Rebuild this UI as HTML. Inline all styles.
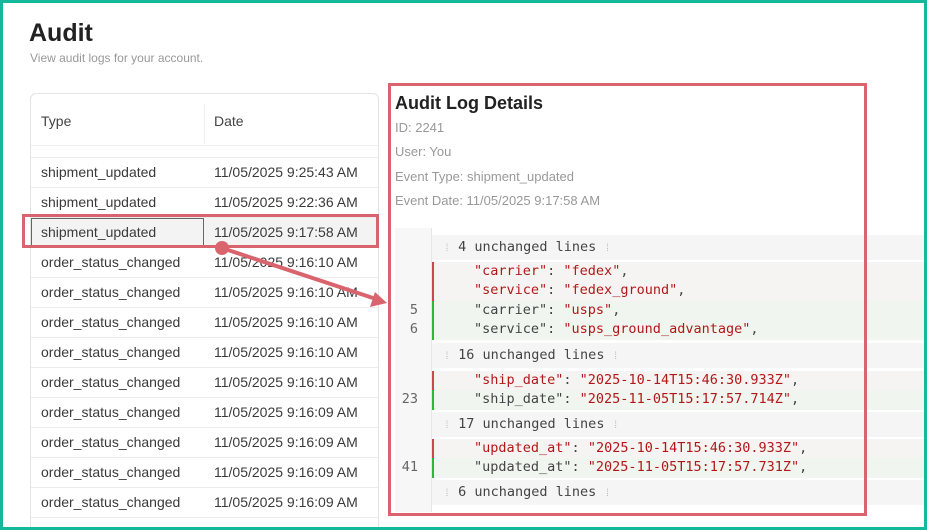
<!DOCTYPE html>
<html><head><style>
*{margin:0;padding:0;box-sizing:border-box}
html,body{width:927px;height:530px;overflow:hidden}
body{background:#fff;font-family:"Liberation Sans",Arial,sans-serif;position:relative}
.frame{position:absolute;left:0;top:0;width:927px;height:530px;border:3px solid #14b89a}
.a{position:absolute;white-space:nowrap}
.card{position:absolute;left:30px;top:93px;width:349px;height:440px;border:1px solid #e4e4e4;border-radius:6px;overflow:hidden}
.row{position:absolute;left:0;width:349px;height:30px;border-top:1px solid #ececec;font-size:14px;color:#3a3a3a;line-height:28px}
.row span{position:absolute}
.mono{font-family:"DejaVu Sans Mono","Liberation Mono",monospace;font-size:13.5px}
.ln{position:absolute;left:395px;width:37px;text-align:right;padding-right:14px;color:#666;font-family:"DejaVu Sans Mono",monospace;font-size:13.5px}
.r{color:#b31818}.g{color:#444}
</style></head><body>
<div class="a" style="left:29px;top:19px;font-size:25px;font-weight:bold;color:#222">Audit</div>
<div class="a" style="left:30px;top:51px;font-size:12px;color:#999">View audit logs for your account.</div>

<div class="card">
 <div class="a" style="left:10px;top:19px;font-size:14px;color:#444">Type</div>
 <div class="a" style="left:183px;top:19px;font-size:14px;color:#444">Date</div>
 <div style="position:absolute;left:173px;top:10px;width:1px;height:40px;background:#f0f0f0"></div>
 <div class="row" style="top:51px;height:13px;border-top:1px solid #f0f0f0"></div>
 <div class="row" style="top:63px"><span style="left:10px">shipment_updated</span><span style="left:183px">11/05/2025 9:25:43 AM</span></div>
 <div class="row" style="top:93px"><span style="left:10px">shipment_updated</span><span style="left:183px">11/05/2025 9:22:36 AM</span></div>
 <div class="row" style="top:123px;background:#f3f3f3"><div style="position:absolute;left:0;top:0;width:173px;height:29px;border:1px solid #666"></div><span style="left:10px">shipment_updated</span><span style="left:183px">11/05/2025 9:17:58 AM</span></div>
 <div class="row" style="top:153px"><span style="left:10px">order_status_changed</span><span style="left:183px">11/05/2025 9:16:10 AM</span></div>
 <div class="row" style="top:183px"><span style="left:10px">order_status_changed</span><span style="left:183px">11/05/2025 9:16:10 AM</span></div>
 <div class="row" style="top:213px"><span style="left:10px">order_status_changed</span><span style="left:183px">11/05/2025 9:16:10 AM</span></div>
 <div class="row" style="top:243px"><span style="left:10px">order_status_changed</span><span style="left:183px">11/05/2025 9:16:10 AM</span></div>
 <div class="row" style="top:273px"><span style="left:10px">order_status_changed</span><span style="left:183px">11/05/2025 9:16:10 AM</span></div>
 <div class="row" style="top:303px"><span style="left:10px">order_status_changed</span><span style="left:183px">11/05/2025 9:16:09 AM</span></div>
 <div class="row" style="top:333px"><span style="left:10px">order_status_changed</span><span style="left:183px">11/05/2025 9:16:09 AM</span></div>
 <div class="row" style="top:363px"><span style="left:10px">order_status_changed</span><span style="left:183px">11/05/2025 9:16:09 AM</span></div>
 <div class="row" style="top:393px"><span style="left:10px">order_status_changed</span><span style="left:183px">11/05/2025 9:16:09 AM</span></div>
 <div class="row" style="top:423px"><span style="left:10px">order_status_changed</span><span style="left:183px">11/05/2025 9:16:09 AM</span></div>
</div>
<div style="position:absolute;left:22px;top:214px;width:357px;height:34px;border:3px solid #d9646e"></div>

<div style="position:absolute;left:395px;top:228px;width:532px;height:284px;background:#fff"></div>
<div style="position:absolute;left:395px;top:228px;width:37px;height:284px;background:#f7f7f7;border-right:1px solid #e6e6e6"></div>
<div style="position:absolute;left:432px;top:235px;width:495px;height:25px;background:#f5f5f5"></div>
<div style="position:absolute;left:432px;top:262px;width:495px;height:39px;background:#f6f3f3;border-left:2px solid #c9484e"></div>
<div style="position:absolute;left:432px;top:301px;width:495px;height:39px;background:#f0f5f0;border-left:2px solid #2db92d"></div>
<div style="position:absolute;left:432px;top:343px;width:495px;height:25px;background:#f5f5f5"></div>
<div style="position:absolute;left:432px;top:371px;width:495px;height:19px;background:#f6f3f3;border-left:2px solid #c9484e"></div>
<div style="position:absolute;left:432px;top:390px;width:495px;height:20px;background:#f0f5f0;border-left:2px solid #2db92d"></div>
<div style="position:absolute;left:432px;top:412px;width:495px;height:25px;background:#f5f5f5"></div>
<div style="position:absolute;left:432px;top:439px;width:495px;height:19px;background:#f6f3f3;border-left:2px solid #c9484e"></div>
<div style="position:absolute;left:432px;top:458px;width:495px;height:20px;background:#f0f5f0;border-left:2px solid #2db92d"></div>
<div style="position:absolute;left:432px;top:480px;width:495px;height:25px;background:#f5f5f5"></div>

<div class="a mono g" style="left:444px;top:239px"><span style="color:#bbb;font-size:10px">⁞</span> 4 unchanged lines <span style="color:#bbb;font-size:10px">⁞</span></div>
<div class="a mono" style="left:474px;top:263px"><span class="r">"carrier"</span><span class="g">: </span><span class="r">"fedex"</span><span class="g">,</span></div>
<div class="a mono" style="left:474px;top:282px"><span class="r">"service"</span><span class="g">: </span><span class="r">"fedex_ground"</span><span class="g">,</span></div>
<div class="ln" style="top:302px">5</div>
<div class="a mono" style="left:474px;top:302px"><span class="g">"carrier": </span><span class="r">"usps"</span><span class="g">,</span></div>
<div class="ln" style="top:321px">6</div>
<div class="a mono" style="left:474px;top:321px"><span class="g">"service": </span><span class="r">"usps_ground_advantage"</span><span class="g">,</span></div>
<div class="a mono g" style="left:444px;top:347px"><span style="color:#bbb;font-size:10px">⁞</span> 16 unchanged lines <span style="color:#bbb;font-size:10px">⁞</span></div>
<div class="a mono" style="left:474px;top:372px"><span class="r">"ship_date"</span><span class="g">: </span><span class="r">"2025-10-14T15:46:30.933Z"</span><span class="g">,</span></div>
<div class="ln" style="top:391px">23</div>
<div class="a mono" style="left:474px;top:391px"><span class="g">"ship_date": </span><span class="r">"2025-11-05T15:17:57.714Z"</span><span class="g">,</span></div>
<div class="a mono g" style="left:444px;top:416px"><span style="color:#bbb;font-size:10px">⁞</span> 17 unchanged lines <span style="color:#bbb;font-size:10px">⁞</span></div>
<div class="a mono" style="left:474px;top:440px"><span class="r">"updated_at"</span><span class="g">: </span><span class="r">"2025-10-14T15:46:30.933Z"</span><span class="g">,</span></div>
<div class="ln" style="top:459px">41</div>
<div class="a mono" style="left:474px;top:459px"><span class="g">"updated_at": </span><span class="r">"2025-11-05T15:17:57.731Z"</span><span class="g">,</span></div>
<div class="a mono g" style="left:444px;top:484px"><span style="color:#bbb;font-size:10px">⁞</span> 6 unchanged lines <span style="color:#bbb;font-size:10px">⁞</span></div>

<div class="a" style="left:395px;top:93px;font-size:18px;font-weight:bold;color:#222">Audit Log Details</div>
<div class="a" style="left:395px;top:120px;font-size:13px;color:#999">ID: 2241</div>
<div class="a" style="left:395px;top:144px;font-size:13px;color:#999">User: You</div>
<div class="a" style="left:395px;top:169px;font-size:13px;color:#999">Event Type: shipment_updated</div>
<div class="a" style="left:395px;top:193px;font-size:13px;color:#999">Event Date: 11/05/2025 9:17:58 AM</div>
<div style="position:absolute;left:388px;top:83px;width:479px;height:433px;border:3px solid #d9646e"></div>

<svg style="position:absolute;left:0;top:0" width="927" height="530">
<line x1="222" y1="248" x2="376" y2="299" stroke="#d9646e" stroke-width="4"/>
<polygon points="387,303 370,307 375,292" fill="#d9646e"/>
<circle cx="222" cy="248" r="7" fill="#d9646e"/>
</svg>
<div class="frame"></div>
</body></html>
